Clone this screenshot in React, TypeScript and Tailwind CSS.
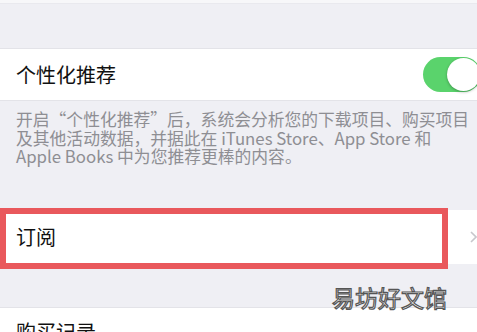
import React from 'react';

const font = '"Noto Sans CJK SC", "Noto Sans", sans-serif';

function Toggle() {
  return (
    <div className="relative h-[35px] w-[58px] shrink-0 -mr-[4px] rounded-full bg-[#5ad36c]">
      <div className="absolute right-[1px] top-[1px] h-[33px] w-[33px] rounded-full bg-white shadow-[0_1px_3px_rgba(0,0,0,0.3)]" />
    </div>
  );
}

function Chevron() {
  return (
    <svg width="7" height="12" viewBox="0 0 7 12" className="shrink-0 -mr-[4px]">
      <polyline points="1 1 6 6 1 11" fill="none" stroke="#c7c7cc" strokeWidth="1.6" />
    </svg>
  );
}

export default function App() {
  return (
    <div className="relative h-[332px] w-[477px] overflow-hidden bg-[#efeff4]" style={{ fontFamily: font }}>
      {/* top band */}
      <div className="h-[4px] bg-[#f7f7f9] border-b border-[#e9e9ee]" />
      <div className="h-[44px]" />

      {/* 个性化推荐 */}
      <div className="flex h-[53px] items-center justify-between border-y border-[#e3e3e8] bg-white pl-4">
        <span className="text-[20px] leading-none text-[#111]">个性化推荐</span>
        <Toggle />
      </div>

      {/* description */}
      <div className="whitespace-nowrap pl-4 pt-[9px] text-[16.8px] leading-[18.6px] text-[#8e8e93]">
        <div>开启“个性化推荐”后，系统会分析您的下载项目、购买项目</div>
        <div>及其他活动数据，并据此在 iTunes Store、App Store 和</div>
        <div>Apple Books 中为您推荐更棒的内容。</div>
      </div>
      <div className="h-[44px]" />

      {/* 订阅 */}
      <div className="relative flex h-[54px] items-center justify-between bg-white pl-4 pr-[4px]">
        <span className="text-[20px] leading-none text-[#111]">订阅</span>
        <Chevron />
        <div className="absolute -top-[2px] -bottom-[5px] left-0 w-[448px] border-[6px] border-[#e9585c]" />
      </div>
      <div className="h-[43px]" />

      {/* 购买记录 */}
      <div className="flex h-[60px] items-start border-t border-[#e3e3e8] bg-white pl-4 pt-[14px]">
        <span className="text-[20px] leading-none text-[#111]">购买记录</span>
      </div>

      {/* watermark */}
      <div
        className="absolute left-[332px] top-[286px] text-[23px] leading-none text-white"
        style={{ WebkitTextStroke: '1.2px #555' }}
      >
        易坊好文馆
      </div>
    </div>
  );
}
